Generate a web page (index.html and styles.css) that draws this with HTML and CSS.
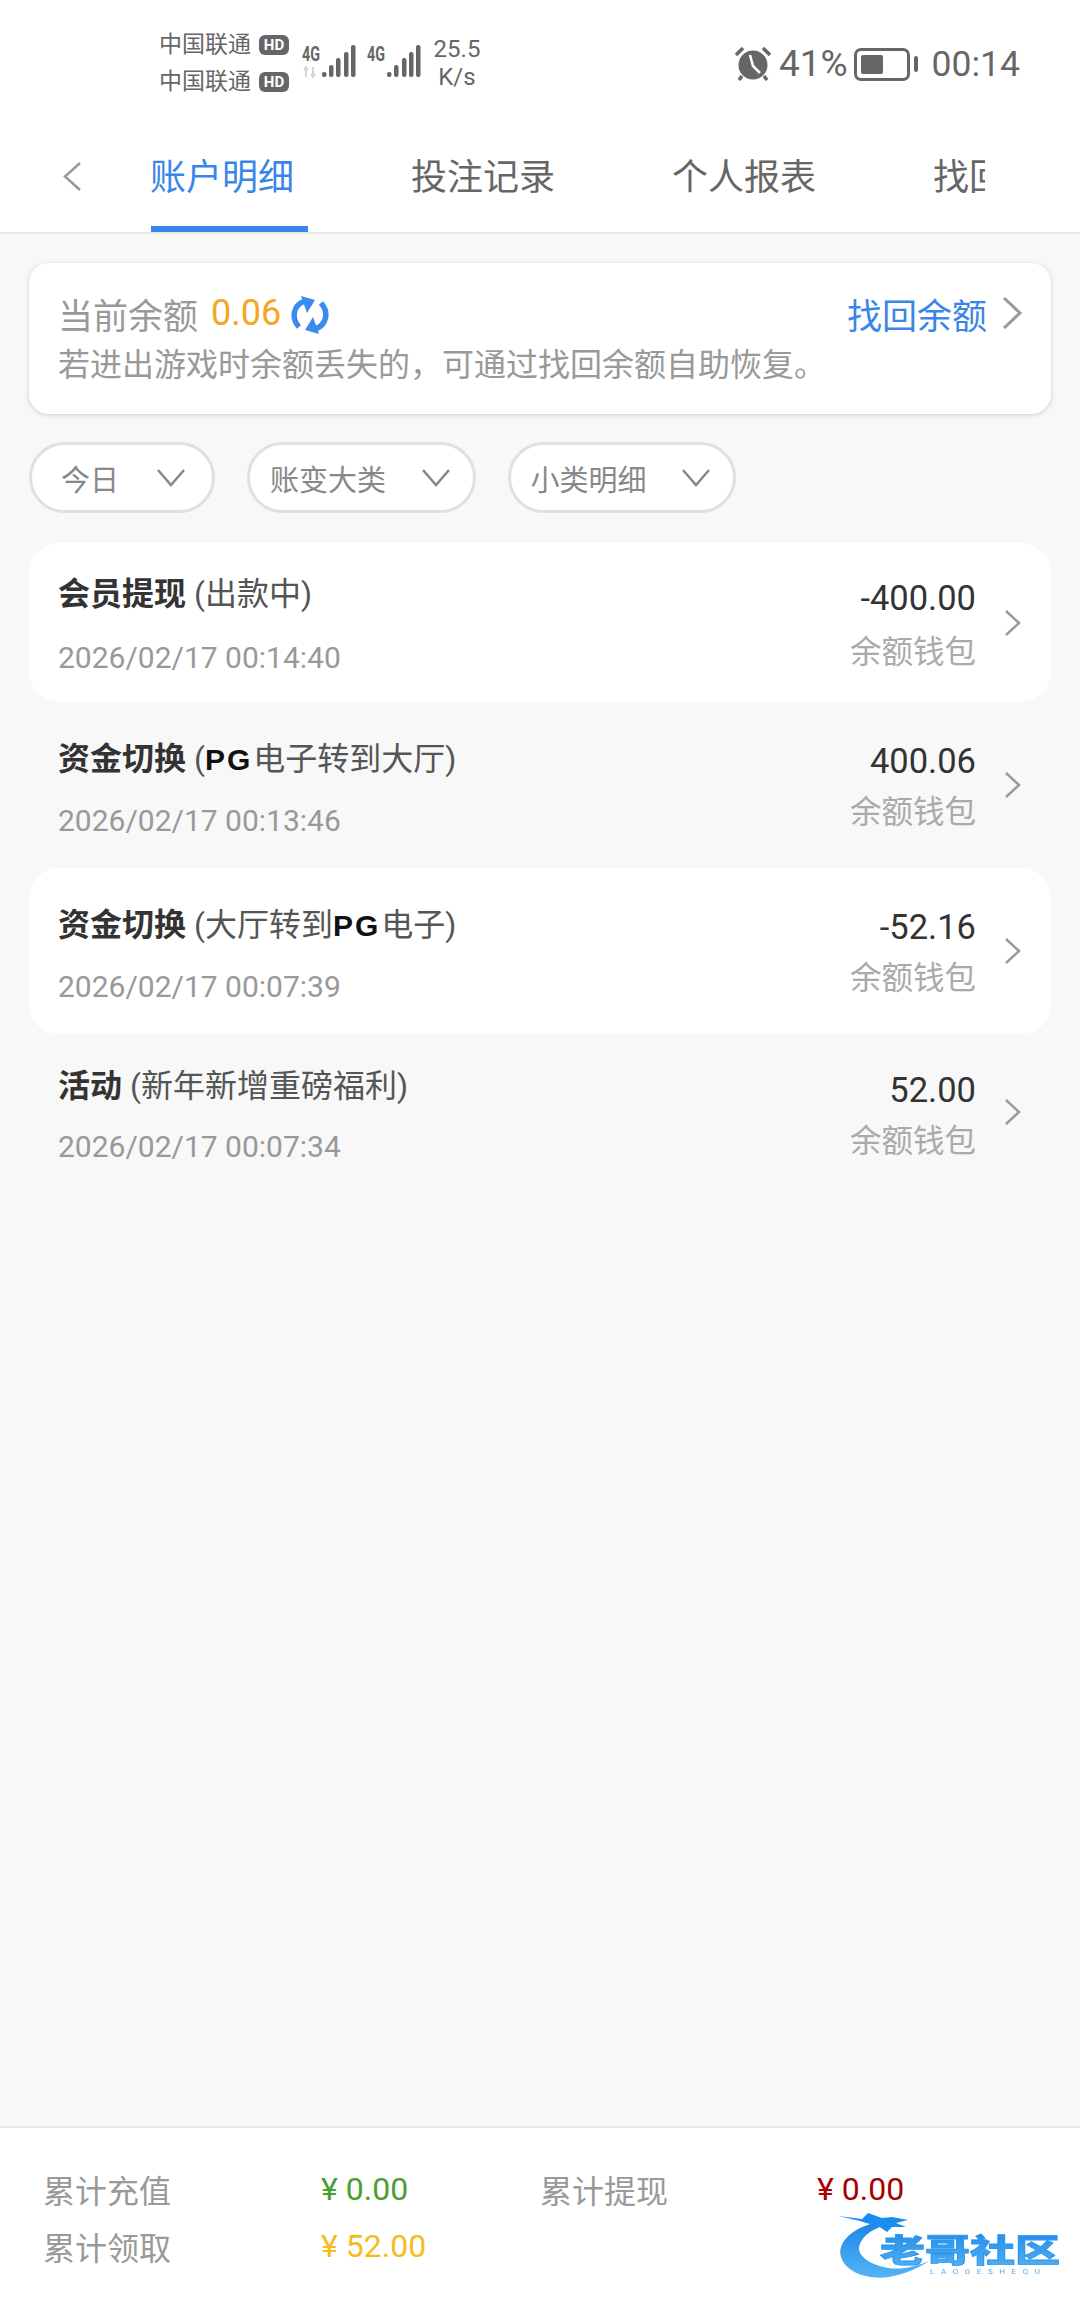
FILE: index.html
```html
<!DOCTYPE html>
<html lang="zh-CN">
<head>
    <meta charset="UTF-8">
    <meta name="viewport" content="width=device-width, initial-scale=1.0">
    <title>账户明细</title>
    <link rel="stylesheet" href="styles.css">
</head>
<body>
    <div class="page">
        <header class="top">
            <div class="statusbar">
                <div class="carriers">
                    <div class="carrier">中国联通<span class="hd">HD</span></div>
                    <div class="carrier">中国联通<span class="hd">HD</span></div>
                </div>
                <svg class="signal" width="60" height="40" viewBox="0 0 60 40">
                    <text x="0" y="16" class="net" textLength="18" lengthAdjust="spacingAndGlyphs">4G</text>
                    <path d="M4 22v10M2 25l2-3 2 3M11 32V22M9 29l2 3 2-3" fill="none" stroke="#d5d5d5" stroke-width="2"/>
                    <rect x="20" y="27" width="4.500" height="5" rx="2" fill="#666"/>
                    <rect x="27" y="20" width="4.500" height="12" rx="2" fill="#666"/>
                    <rect x="34" y="13" width="4.500" height="19" rx="2" fill="#666"/>
                    <rect x="42" y="7" width="4.500" height="25" rx="2" fill="#666"/>
                    <rect x="49" y="0" width="4.500" height="32" rx="2" fill="#666"/>
                </svg>
                <svg class="signal signal-two" width="54" height="40" viewBox="0 0 54 40">
                    <text x="0" y="16" class="net" textLength="18" lengthAdjust="spacingAndGlyphs">4G</text>
                    <rect x="20" y="27" width="4.500" height="5" rx="2" fill="#666"/>
                    <rect x="27" y="20" width="4.500" height="12" rx="2" fill="#666"/>
                    <rect x="35" y="13" width="4.500" height="19" rx="2" fill="#666"/>
                    <rect x="42" y="7" width="4.500" height="25" rx="2" fill="#666"/>
                    <rect x="49" y="0" width="4.500" height="32" rx="2" fill="#666"/>
                </svg>
                <div class="speed">25.5<br>K/s</div>
                <div class="status-right">
                    <svg class="alarm" width="36" height="34" viewBox="0 0 36 34">
                        <circle cx="18" cy="18" r="14.500" fill="#666"/>
                        <path d="M1 8l7-7M35 8l-7-7M7 29l-3 4M29 29l3 4" stroke="#666" stroke-width="3.500" fill="none"/>
                        <path d="M15 8l3 11 7 7" stroke="#fff" stroke-width="2.500" fill="none"/>
                    </svg>
                    <span class="percent">41%</span>
                    <div class="battery"><div class="battery-fill"></div></div>
                    <div class="battery-tip"></div>
                    <span class="clock">00:14</span>
                </div>
            </div>
            <nav class="navbar">
                <button class="back">
                    <svg width="20" height="29" viewBox="0 0 20 29"><path d="M18 1L3 14.500 18 28" fill="none" stroke="#999" stroke-width="2.500"/></svg>
                </button>
                <div class="tabs">
                    <a class="tab active">账户明细</a>
                    <a class="tab">投注记录</a>
                    <a class="tab">个人报表</a>
                    <a class="tab">找回余额</a>
                </div>
            </nav>
        </header>

        <main class="content">
            <section class="balance-card">
                <div class="balance-top">
                    <div class="balance-left">
                        <span class="balance-label">当前余额</span>
                        <span class="balance-value">0.06</span>
                        <svg class="refresh" width="38" height="38" viewBox="0 0 38 38">
                            <path d="M8 31C0 22 2 9 14 5" fill="none" stroke="#3a8bee" stroke-width="5.500"/>
                            <path d="M10 0l14 4-8 13z" fill="#3a8bee"/>
                            <path d="M30 7c8 9 6 22-6 26" fill="none" stroke="#3a8bee" stroke-width="5.500"/>
                            <path d="M28 38l-14-4 8-13z" fill="#3a8bee"/>
                        </svg>
                    </div>
                    <a class="recover">找回余额
                        <svg width="22" height="32" viewBox="0 0 22 32"><path d="M3 1l16 15L3 31" fill="none" stroke="#999" stroke-width="3"/></svg>
                    </a>
                </div>
                <p class="balance-tip">若进出游戏时余额丢失的，可通过找回余额自助恢复。</p>
            </section>

            <div class="filters">
                <div class="pill pill-short"><span>今日</span><svg width="28" height="18" viewBox="0 0 28 18"><path d="M1 1l13 15L27 1" fill="none" stroke="#888" stroke-width="2.500"/></svg></div>
                <div class="pill"><span>账变大类</span><svg width="28" height="18" viewBox="0 0 28 18"><path d="M1 1l13 15L27 1" fill="none" stroke="#888" stroke-width="2.500"/></svg></div>
                <div class="pill"><span>小类明细</span><svg width="28" height="18" viewBox="0 0 28 18"><path d="M1 1l13 15L27 1" fill="none" stroke="#888" stroke-width="2.500"/></svg></div>
            </div>

            <ul class="records">
                <li class="record odd">
                    <div class="record-main">
                        <div class="record-title"><b>会员提现</b> (出款中)</div>
                        <div class="record-date">2026/02/17 00:14:40</div>
                    </div>
                    <div class="record-side">
                        <div class="record-amount">-400.00</div>
                        <div class="record-wallet">余额钱包</div>
                    </div>
                    <svg class="row-arrow" width="16" height="26" viewBox="0 0 16 26"><path d="M1 1l13 12L1 25" fill="none" stroke="#999" stroke-width="2.500"/></svg>
                </li>
                <li class="record">
                    <div class="record-main">
                        <div class="record-title tall"><b>资金切换</b> (<span class="pg">PG</span>电子转到大厅)</div>
                        <div class="record-date">2026/02/17 00:13:46</div>
                    </div>
                    <div class="record-side">
                        <div class="record-amount">400.06</div>
                        <div class="record-wallet">余额钱包</div>
                    </div>
                    <svg class="row-arrow" width="16" height="26" viewBox="0 0 16 26"><path d="M1 1l13 12L1 25" fill="none" stroke="#999" stroke-width="2.500"/></svg>
                </li>
                <li class="record odd">
                    <div class="record-main">
                        <div class="record-title tall"><b>资金切换</b> (大厅转到<span class="pg">PG</span>电子)</div>
                        <div class="record-date">2026/02/17 00:07:39</div>
                    </div>
                    <div class="record-side">
                        <div class="record-amount">-52.16</div>
                        <div class="record-wallet">余额钱包</div>
                    </div>
                    <svg class="row-arrow" width="16" height="26" viewBox="0 0 16 26"><path d="M1 1l13 12L1 25" fill="none" stroke="#999" stroke-width="2.500"/></svg>
                </li>
                <li class="record">
                    <div class="record-main">
                        <div class="record-title"><b>活动</b> (新年新增重磅福利)</div>
                        <div class="record-date">2026/02/17 00:07:34</div>
                    </div>
                    <div class="record-side">
                        <div class="record-amount">52.00</div>
                        <div class="record-wallet">余额钱包</div>
                    </div>
                    <svg class="row-arrow" width="16" height="26" viewBox="0 0 16 26"><path d="M1 1l13 12L1 25" fill="none" stroke="#999" stroke-width="2.500"/></svg>
                </li>
            </ul>
        </main>

        <footer class="totals">
            <span class="total-label">累计充值</span>
            <span class="total-value green">¥ 0.00</span>
            <span class="total-label">累计提现</span>
            <span class="total-value red">¥ 0.00</span>
            <span class="total-label">累计领取</span>
            <span class="total-value yellow">¥ 52.00</span>

            <!-- 水印 -->
            <svg class="watermark" width="224" height="74" viewBox="0 0 224 74">
                <defs>
                    <linearGradient id="wm" x1="0" y1="0" x2="0" y2="1">
                        <stop offset="0" stop-color="#1c86e6"/>
                        <stop offset="1" stop-color="#55b4f5"/>
                    </linearGradient>
                    <filter id="soft"><feGaussianBlur stdDeviation="0.500"/></filter>
                </defs>
                <g filter="url(#soft)">
                    <path d="M36 13C12 19 -1 34 3 47c5 16 28 23 48 20 16-3 30-9 40-16-14 6-28 9-41 7C32 55 17 45 22 34c2-6 9-13 20-17z" fill="url(#wm)"/>
                    <path d="M0 6l24 3 6-6 14 5 10-1 16 3-12 3 10 4-14 0-5 5-9-6-12-3L22 11z" fill="#1c8df0"/>
                    <text x="42" y="52" class="wm-title" fill="url(#wm)" stroke="#2b96ec" stroke-width="0.800" textLength="180" lengthAdjust="spacingAndGlyphs">老哥社区</text>
                    <text x="92" y="64" class="wm-sub" textLength="110">LAOGESHEQU</text>
                </g>
            </svg>
        </footer>
    </div>
</body>
</html>
```

FILE: styles.css
```css
* {
    box-sizing: border-box;
}
body {
    margin: 0;
    background-color: #f8f8f8;
    font-family: Roboto, "Noto Sans CJK SC", sans-serif;
    color: #333;
}
ul {
    list-style: none;
    margin: 0;
    padding: 0;
}
.page {
    width: 1080px;
    height: 2310px;
    display: flex;
    flex-direction: column;
    overflow: hidden;
}

/* 顶部 */
.top {
    background: white;
    border-bottom: 2px solid #e6e6e6;
}
.statusbar {
    height: 100px;
    display: flex;
    align-items: flex-start;
    padding: 26px 60px 0 159px;
    color: #666;
}
.carriers {
    width: 134px;
}
.carrier {
    height: 37px;
    line-height: 37px;
    font-size: 23px;
    display: flex;
    align-items: center;
    white-space: nowrap;
}
.hd {
    margin-left: 8px;
    width: 30px;
    height: 20px;
    line-height: 20px;
    background: #666;
    color: white;
    font-size: 15px;
    font-weight: bold;
    text-align: center;
    border-radius: 6px;
}
.signal {
    margin: 19px 0 0 9px;
    overflow: visible;
}
.signal-two {
    margin-left: 5px;
}
.net {
    font-family: Roboto, sans-serif;
    font-size: 20px;
    font-weight: bold;
    fill: #666;
}
.speed {
    width: 60px;
    margin: 9px 0 0 6px;
    font-size: 24px;
    line-height: 28px;
    text-align: center;
}
.status-right {
    margin-left: auto;
    margin-top: 18px;
    display: flex;
    align-items: center;
    font-size: 35.500px;
    line-height: 40px;
}
.percent {
    margin-left: 8px;
    font-size: 37px;
}
.battery {
    width: 56px;
    height: 33px;
    margin-left: 6px;
    padding: 4px;
    border: 3px solid #666;
    border-radius: 7px;
}
.battery-fill {
    width: 22px;
    height: 100%;
    background: #666;
    border-radius: 2px;
}
.battery-tip {
    width: 4px;
    height: 16px;
    margin-left: 4px;
    background: #666;
    border-radius: 2px;
}
.clock {
    margin-left: 14px;
}
.navbar {
    height: 132px;
    display: flex;
}
.back {
    width: 151px;
    height: 100px;
    padding: 52px 0 0 62px;
    border: none;
    background: none;
    text-align: left;
}
.back svg {
    display: block;
}
.tabs {
    width: 834px;
    display: flex;
    gap: 104px;
    overflow: hidden;
}
.tab {
    flex: 0 0 157px;
    height: 132px;
    padding-top: 52px;
    font-size: 36px;
    line-height: 52px;
    color: #666;
    text-indent: -1px;
    white-space: nowrap;
}
.tab.active {
    color: #3a86e8;
    border-bottom: 6px solid #3a86e8;
}

/* 余额卡片 */
.content {
    flex: 1;
}
.balance-card {
    height: 151px;
    margin: 29px 29px 0;
    padding: 26px 28px 0 29px;
    background: white;
    border-radius: 20px;
    box-shadow: 0 1px 5px rgba(0, 0, 0, 0.18);
}
.balance-top {
    height: 48px;
    display: flex;
    justify-content: space-between;
    align-items: center;
}
.balance-left {
    display: flex;
    align-items: center;
}
.balance-label {
    font-size: 35px;
    color: #999;
}
.balance-value {
    margin-left: 13px;
    font-size: 36px;
    color: #f5a623;
}
.refresh {
    margin-left: 10px;
    margin-top: 3px;
}
.recover {
    display: flex;
    align-items: center;
    gap: 14px;
    font-size: 35px;
    color: #3a86e8;
}
.balance-tip {
    margin: 3px 0 0;
    font-size: 32px;
    line-height: 50px;
    color: #999;
    white-space: nowrap;
}

/* 筛选 */
.filters {
    display: flex;
    gap: 32px;
    margin: 28px 29px 0;
}
.pill {
    width: 228.500px;
    height: 71px;
    padding: 0 23px 0 20px;
    display: flex;
    align-items: center;
    justify-content: space-between;
    background: white;
    border: 3px solid #e0e0e0;
    border-radius: 36px;
    font-size: 29px;
    color: #888;
}
.pill-short {
    width: 186px;
    padding: 0 27px 0 29px;
}

/* 列表 */
.records {
    margin: 30px 29px 0;
}
.record {
    display: flex;
    align-items: center;
    padding: 0 30px 0 29px;
}
.record:last-child {
    padding-top: 1px;
}
.record:last-child .row-arrow {
    margin-top: -6px;
}
.record.odd {
    background: white;
    border-radius: 30px;
}
.record-main {
    flex: 1;
    padding: 30px 0 26px;
}
.record-title {
    font-size: 32px;
    line-height: 42px;
    color: #555;
}
.record-title.tall {
    padding-top: 6px;
}
.record-title b {
    color: #333;
}
.pg {
    font-family: "Liberation Sans", sans-serif;
    font-weight: bold;
    font-size: 30px;
    color: #111;
    letter-spacing: 2px;
    margin-right: 1px;
}
.record-date {
    margin-top: 24px;
    font-size: 30px;
    line-height: 37px;
    color: #999;
}
/* 后面几行日期略靠上 */
.record + .record .record-date {
    margin-top: 21px;
    margin-bottom: 3px;
}
.record-side {
    padding-top: 6px;
    text-align: right;
}
.record + .record .record-side {
    padding-top: 3px;
}
.record-amount {
    font-size: 34.500px;
    line-height: 51px;
    color: #333;
}
.record-wallet {
    margin-top: 3px;
    font-size: 31.500px;
    line-height: 51px;
    color: #aaa;
}
.record + .record .record-wallet {
    margin-top: 0;
}
.row-arrow {
    margin-left: 29px;
}

/* 底部统计 */
.totals {
    position: relative;
    height: 184px;
    padding: 32px 0 0 43px;
    display: grid;
    grid-template-columns: 278px 219px 277px 1fr;
    grid-auto-rows: 57px;
    align-items: center;
    background: white;
    border-top: 2px solid #e6e6e6;
    font-size: 32px;
}
.total-label {
    color: #999;
}
.green {
    color: #4a9e2f;
}
.red {
    color: #a80000;
}
.yellow {
    color: #f5bc1c;
}
.watermark {
    position: absolute;
    left: 838px;
    top: 82px;
}
.wm-title {
    font-family: "Noto Sans CJK SC", sans-serif;
    font-size: 32px;
    font-weight: 900;
}
.wm-sub {
    font-family: Roboto, sans-serif;
    font-size: 8px;
    fill: #5aa9ea;
}
```
